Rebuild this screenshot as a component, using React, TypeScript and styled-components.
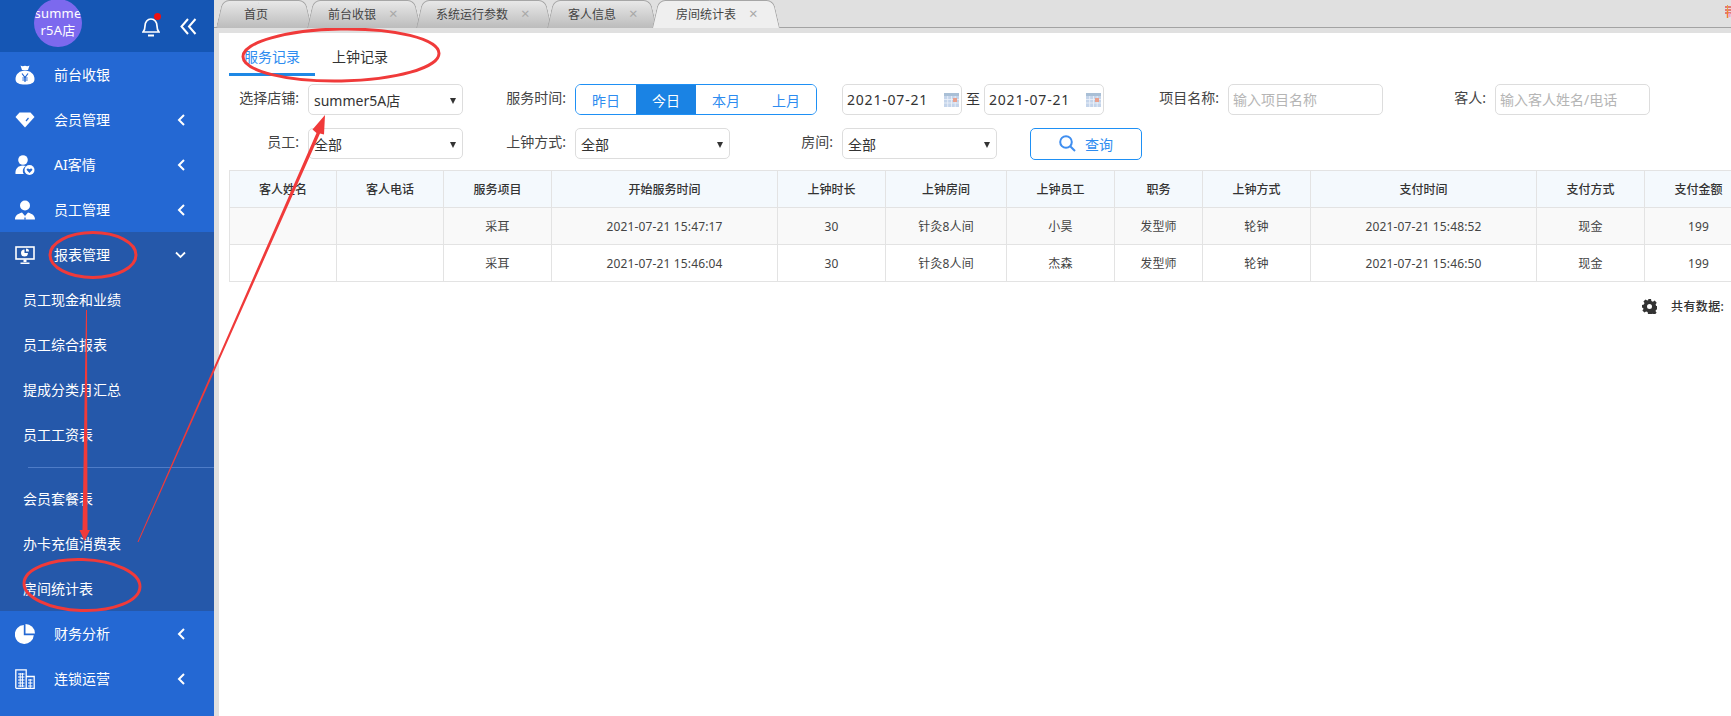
import React from "react";
import styled, { createGlobalStyle } from "styled-components";

const Global = createGlobalStyle`
  html, body { margin: 0; padding: 0; background: #fff; overflow: hidden; }
  body { font-family: "Noto Sans", "Noto Sans CJK SC", sans-serif; font-size: 14px; color: #333; }
  * { box-sizing: border-box; }
`;

const Shell = styled.div`
  position: relative;
  display: flex;
  width: 100%;
  height: 100vh;
  overflow: hidden;
`;

const Sidebar = styled.aside`
  flex: 0 0 214px;
  background: #2468d3;
  color: #fff;
  overflow: hidden;
`;

const SideHeader = styled.header`
  position: relative;
  display: flex;
  align-items: center;
  height: 52px;
  padding: 0 17px 0 34px;
  background: #1556b4;
`;

const Avatar = styled.div`
  width: 48px;
  height: 48px;
  margin-top: -6px;
  border-radius: 50%;
  background: #7c69ee;
  font-size: 13px;
  letter-spacing: 0.2px;
  line-height: 17px;
  padding-top: 6px;
  text-align: center;
  word-break: break-all;
  overflow: hidden;
`;

const HeaderTools = styled.div`
  display: flex;
  align-items: center;
  gap: 20px;
  margin-left: auto;
`;

const BellWrap = styled.span`
  position: relative;
  display: flex;
  &::after {
    content: "";
    position: absolute;
    right: -1px;
    top: -3px;
    width: 7px;
    height: 7px;
    border-radius: 50%;
    background: #f01010;
  }
`;

const MenuRow = styled.div<{ $open?: boolean }>`
  display: flex;
  align-items: center;
  height: 45px;
  padding: 0 28px 0 15px;
  background: ${(p) => (p.$open ? "#2558aa" : "transparent")};
`;

const MenuIcon = styled.span`
  display: flex;
  flex: 0 0 20px;
  margin-right: 19px;
`;

const MenuLabel = styled.span`
  font-size: 14px;
  line-height: 20px;
`;

const MenuChevron = styled.span`
  display: flex;
  margin-left: auto;
`;

const SubList = styled.div`
  background: #2558aa;
`;

const SubItem = styled.div`
  display: flex;
  align-items: center;
  height: 45px;
  padding: 0 0 2px 23px;
  font-size: 14px;
`;

const SubDivider = styled.div`
  height: 1px;
  margin: 10px 0 8px 28px;
  background: #4e7cc8;
`;

const Main = styled.main`
  flex: 1;
  min-width: 0;
  display: flex;
  flex-direction: column;
  background: #e0e0e0;
`;

const TabStrip = styled.nav`
  position: relative;
  display: flex;
  align-items: flex-end;
  flex: 0 0 28px;
  padding-left: 2px;
  border-bottom: 1px solid #a3a3a3;
`;

const tabFill = (active?: boolean) => (active ? "#efefef" : "linear-gradient(#e8e8e8, #bcbcbc)");

const Tab = styled.div<{ $w: number; $pad: number; $active?: boolean }>`
  position: relative;
  z-index: ${(p) => (p.$active ? 2 : 1)};
  display: flex;
  align-items: center;
  width: ${(p) => p.$w}px;
  height: 27px;
  margin-right: -4px;
  padding-left: ${(p) => p.$pad}px;
  font-size: 12px;
  color: #444;
  &::before,
  &::after {
    content: "";
    position: absolute;
    top: 0;
    bottom: -1px;
    z-index: -1;
    background: ${(p) => tabFill(p.$active)};
    border-top: 1px solid #a6a6a6;
    transform-origin: bottom center;
  }
  &::before {
    left: 0;
    right: 50%;
    border-left: 1px solid #a6a6a6;
    border-radius: 7px 0 0 0;
    transform: skewX(-13deg);
  }
  &::after {
    left: 50%;
    right: 0;
    border-right: 1px solid #a6a6a6;
    border-radius: 0 7px 0 0;
    transform: skewX(13deg);
  }
`;

const TabClose = styled.span<{ $left: number }>`
  position: absolute;
  left: ${(p) => p.$left}px;
  top: 5px;
  font-size: 15px;
  line-height: 16px;
  color: #a8a8a8;
`;

const CornerMark = styled.svg`
  position: absolute;
  right: 0;
  top: 5px;
`;

const Panel = styled.section`
  flex: 1;
  min-height: 0;
  margin: 5px 0 0 5px;
  padding-left: 10px;
  background: #fff;
  overflow: hidden;
`;

const SubTabs = styled.div`
  display: flex;
  gap: 2px;
  height: 44px;
`;

const SubTab = styled.div<{ $active?: boolean }>`
  display: flex;
  align-items: center;
  padding: 5px 15px 0;
  height: 43px;
  font-size: 14px;
  color: ${(p) => (p.$active ? "#2d8cf0" : "#333")};
  border-bottom: 3px solid ${(p) => (p.$active ? "#1e88e5" : "transparent")};
`;

const FilterRow = styled.div<{ $top: number }>`
  display: flex;
  align-items: center;
  height: 31px;
  margin-top: ${(p) => p.$top}px;
`;

const Field = styled.div<{ $w: number }>`
  display: flex;
  align-items: center;
  justify-content: flex-end;
  gap: 9px;
  flex: 0 0 ${(p) => p.$w}px;
`;

const FieldLabel = styled.label`
  font-size: 14px;
  line-height: 20px;
  margin-top: -3px;
  white-space: nowrap;
  color: #444;
`;

const SelectBox = styled.div`
  position: relative;
  display: flex;
  align-items: center;
  width: 155px;
  height: 31px;
  padding-left: 5px;
  border: 1px solid #ddd;
  border-radius: 5px;
  font-size: 14px;
  color: #333;
  &::after {
    content: "";
    position: absolute;
    right: 6px;
    top: 13px;
    border-style: solid;
    border-width: 6px 3px 0;
    border-color: #333 transparent transparent;
  }
`;

const Segments = styled.div`
  display: flex;
  height: 31px;
  border: 1px solid #1e90f5;
  border-radius: 6px;
  overflow: hidden;
`;

const Segment = styled.div<{ $active?: boolean }>`
  display: flex;
  align-items: center;
  justify-content: center;
  width: 60px;
  font-size: 14px;
  color: ${(p) => (p.$active ? "#fff" : "#2d8cf0")};
  background: ${(p) => (p.$active ? "#1a83e4" : "#fff")};
`;

const DateGroup = styled.div`
  display: flex;
  align-items: center;
  gap: 4px;
`;

const DateBox = styled.div`
  display: flex;
  align-items: center;
  justify-content: space-between;
  width: 120px;
  height: 31px;
  padding: 0 2px 0 4px;
  border: 1px solid #ddd;
  border-radius: 5px;
  font-size: 14px;
  letter-spacing: 0.8px;
`;

const To = styled.span`
  font-size: 14px;
  margin-top: -3px;
  color: #333;
`;

const TextInput = styled.input`
  width: 155px;
  height: 31px;
  padding: 0 4px;
  border: 1px solid #ddd;
  border-radius: 5px;
  font: inherit;
  font-size: 14px;
  &::placeholder { color: #b5b5b5; }
`;

const QueryButton = styled.button`
  display: flex;
  align-items: center;
  justify-content: center;
  gap: 9px;
  width: 112px;
  height: 32px;
  margin-left: 33px;
  background: #fff;
  border: 1px solid #1e90f5;
  border-radius: 5px;
  font: inherit;
  font-size: 14px;
  color: #2d8cf0;
`;

const DataTable = styled.table`
  table-layout: fixed;
  width: 1522px;
  margin-top: 11px;
  border-collapse: collapse;
  font-size: 12px;
  color: #444;
`;

const HeadCell = styled.th`
  height: 37px;
  padding: 0;
  background: #f4f9fd;
  border: 1px solid #e3e3e3;
  font-weight: 500;
  color: #333;
  text-align: center;
`;

const BodyRow = styled.tr<{ $striped?: boolean }>`
  background: ${(p) => (p.$striped ? "#f9f9f9" : "#fff")};
`;

const BodyCell = styled.td`
  height: 37px;
  padding: 0;
  border: 1px solid #e3e3e3;
  text-align: center;
  letter-spacing: 0.15px;
`;

const Footer = styled.div`
  display: flex;
  align-items: center;
  gap: 14px;
  margin: 15px 0 0 1413px;
  width: 90px;
  font-size: 12px;
  font-weight: 500;
  letter-spacing: 0.4px;
  white-space: nowrap;
`;

const Annotations = styled.svg`
  position: absolute;
  left: 0;
  top: 0;
  pointer-events: none;
`;

const W = "#fff";
const B = "#2468d3";

const BagIcon = () => (
  <svg width="20" height="20" viewBox="0 0 20 20">
    <path d="M5.5 0.5c1.4.9 3 .9 4.5.2 1.5.7 3.100.7 4.500-.2L13 5H7z" fill={W} />
    <path d="M10 5.500c5 0 9.500 3.500 9.500 8.500 0 4.300-4 5.500-9.500 5.500S.5 18.300.5 14C.5 9 5 5.500 10 5.500z" fill={W} />
    <path d="M7 8.500l3 4 3-4M10 12.500V17M7.300 13h5.400M7.300 15h5.400" stroke={B} strokeWidth="1.200" fill="none" />
  </svg>
);
const GemIcon = () => (
  <svg width="20" height="20" viewBox="0 0 20 20">
    <path d="M4.500 2.500h11L19.500 7 10 17.500.5 7z" fill={W} />
    <path d="M11 11l2.500-3" stroke={B} strokeWidth="1.200" />
  </svg>
);
const GuestIcon = () => (
  <svg width="20" height="20" viewBox="0 0 20 20">
    <circle cx="8" cy="5" r="4.800" fill={W} />
    <path d="M.5 19c-.5-5 2.500-8.500 7.500-8.500 1 0 2 .2 2.800.5-2 1.200-3 3-3 5 0 1.300.4 2.300 1 3z" fill={W} />
    <circle cx="14.500" cy="15" r="5" fill={W} />
    <path d="M14.500 18l-2.600-2.800c-.9-1.200.9-2.700 2.600-1 1.700-1.700 3.500-.2 2.600 1z" fill={B} />
  </svg>
);
const StaffIcon = () => (
  <svg width="20" height="20" viewBox="0 0 20 20">
    <circle cx="10" cy="5.500" r="5" fill={W} />
    <path d="M0 19.500c0-4 2.500-5.500 7-7l3 3.500 3-3.500c4.500 1.500 7 3 7 7z" fill={W} />
    <path d="M10 16.500l-1 3h2z" fill={B} />
  </svg>
);
const MonitorIcon = () => (
  <svg width="20" height="20" viewBox="0 0 20 20">
    <rect x="1" y="2" width="18" height="12" fill="none" stroke={W} strokeWidth="1.600" />
    <path d="M9.500 4.500a3.500 3.500 0 1 0 3.500 3.500H9.500z" fill={W} />
    <path d="M11 3.500a3 3 0 0 1 3 3h-3z" fill={W} />
    <path d="M8.500 14.500h3v2.500h-3zM5.500 17.500h9v1.500h-9z" fill={W} />
  </svg>
);
const PieIcon = () => (
  <svg width="20" height="20" viewBox="0 0 20 20">
    <path d="M8.800 1a9.500 9.500 0 1 0 10 10.200h-10z" fill={W} />
    <path d="M10.500 0a9.500 9.500 0 0 1 9.500 9.500h-9.500z" fill={W} />
  </svg>
);
const BuildingIcon = () => (
  <svg width="20" height="20" viewBox="0 0 20 20" fill="none" stroke={W} strokeWidth="1">
    <path d="M.8 19.300V.8h10.400v18.500M11.200 7.500h8v11.800H.8" strokeWidth="1.300" />
    <path d="M3 5h6.500M3 8h6.500M3 11h6.500M3 14h6.500M3 17h6.500M5.200 4v14M7.400 4v14M13 11h4.500M13 14h4.500M13 17h4.500M15.200 10v9" />
  </svg>
);

const ChevronLeft = () => (
  <svg width="9" height="12" viewBox="0 0 9 12" fill="none" stroke={W} strokeWidth="2">
    <path d="M7 1L2 6l5 5" />
  </svg>
);
const ChevronDown = () => (
  <svg width="11" height="8" viewBox="0 0 11 8" fill="none" stroke={W} strokeWidth="1.800">
    <path d="M1 1.500l4.500 4.500L10 1.500" />
  </svg>
);

const CalendarIcon = () => (
  <svg width="15" height="14" viewBox="0 0 15 14">
    <rect x="0" y="0" width="15" height="3" fill="#a9bfd6" />
    <rect x="0" y="3" width="15" height="11" fill="#c4d4ea" />
    <path d="M0 6.500h15M0 10h15M3.700 3v11M7.500 3v11M11.200 3v11" stroke="#eef3fa" strokeWidth="0.800" />
    <rect x="9" y="5" width="4" height="4" fill="#e9a08e" />
  </svg>
);

const menuTop = [
  { label: "前台收银", icon: <BagIcon /> },
  { label: "会员管理", icon: <GemIcon />, more: true },
  { label: "AI客情", icon: <GuestIcon />, more: true },
  { label: "员工管理", icon: <StaffIcon />, more: true },
];
const subA = ["员工现金和业绩", "员工综合报表", "提成分类月汇总", "员工工资表"];
const subB = ["会员套餐表", "办卡充值消费表", "房间统计表"];
const menuBottom = [
  { label: "财务分析", icon: <PieIcon /> },
  { label: "连锁运营", icon: <BuildingIcon /> },
];

const tabs = [
  { label: "首页", w: 95, pad: 28 },
  { label: "前台收银", w: 113, pad: 21, close: 82 },
  { label: "系统运行参数", w: 135, pad: 20, close: 105 },
  { label: "客人信息", w: 109, pad: 21, close: 82 },
  { label: "房间统计表", w: 128, pad: 24, close: 97, active: true },
];

const columns: [string, number][] = [
  ["客人姓名", 107], ["客人电话", 107], ["服务项目", 108], ["开始服务时间", 226],
  ["上钟时长", 108], ["上钟房间", 121], ["上钟员工", 108], ["职务", 88],
  ["上钟方式", 108], ["支付时间", 226], ["支付方式", 108], ["支付金额", 108],
];

const rows = [
  ["", "", "采耳", "2021-07-21 15:47:17", "30", "针灸8人间", "小昊", "发型师", "轮钟", "2021-07-21 15:48:52", "现金", "199"],
  ["", "", "采耳", "2021-07-21 15:46:04", "30", "针灸8人间", "杰森", "发型师", "轮钟", "2021-07-21 15:46:50", "现金", "199"],
];

export default function App() {
  return (
    <Shell>
      <Global />
      <Sidebar>
        <SideHeader>
          <Avatar>summer5A店</Avatar>
          <HeaderTools>
            <BellWrap>
              <svg width="18" height="21" viewBox="0 0 18 21" fill="none" stroke="#fff" strokeWidth="1.700">
                <path d="M1 16c1.500-1.500 2-3 2-6 0-4 2.500-7 6-7s6 3 6 7c0 3 .5 4.500 2 6z" />
                <path d="M6 19.500h6" strokeWidth="2" />
              </svg>
            </BellWrap>
            <svg width="17" height="17" viewBox="0 0 17 17" fill="none" stroke="#fff" strokeWidth="2">
              <path d="M8 1L1.500 8.500 8 16M15.500 1L9 8.500l6.500 7.500" />
            </svg>
          </HeaderTools>
        </SideHeader>
        {menuTop.map((m) => (
          <MenuRow key={m.label}>
            <MenuIcon>{m.icon}</MenuIcon>
            <MenuLabel>{m.label}</MenuLabel>
            {m.more && (
              <MenuChevron>
                <ChevronLeft />
              </MenuChevron>
            )}
          </MenuRow>
        ))}
        <MenuRow $open>
          <MenuIcon>
            <MonitorIcon />
          </MenuIcon>
          <MenuLabel>报表管理</MenuLabel>
          <MenuChevron>
            <ChevronDown />
          </MenuChevron>
        </MenuRow>
        <SubList>
          {subA.map((s) => (
            <SubItem key={s}>{s}</SubItem>
          ))}
          <SubDivider />
          {subB.map((s) => (
            <SubItem key={s}>{s}</SubItem>
          ))}
        </SubList>
        {menuBottom.map((m) => (
          <MenuRow key={m.label}>
            <MenuIcon>{m.icon}</MenuIcon>
            <MenuLabel>{m.label}</MenuLabel>
            <MenuChevron>
              <ChevronLeft />
            </MenuChevron>
          </MenuRow>
        ))}
      </Sidebar>
      <Main>
        <TabStrip>
          {tabs.map((t) => (
            <Tab key={t.label} $w={t.w} $pad={t.pad} $active={t.active}>
              {t.label}
              {t.close && <TabClose $left={t.close}>×</TabClose>}
            </Tab>
          ))}
          <CornerMark width="6" height="13" viewBox="0 0 6 13" fill="none">
            <path d="M0 2h6M0 5h6M0 8h6" stroke="#e81010" strokeWidth="1.200" />
            <path d="M2.500 0v6" stroke="#e8a040" strokeWidth="1" />
            <path d="M2.500 6v7" stroke="#f08030" strokeWidth="1.500" />
            <path d="M4.500 8v4" stroke="#f0a0d0" strokeWidth="2" />
          </CornerMark>
        </TabStrip>
        <Panel>
          <SubTabs>
            <SubTab $active>服务记录</SubTab>
            <SubTab>上钟记录</SubTab>
          </SubTabs>
          <FilterRow $top={7}>
            <Field $w={234}>
              <FieldLabel>选择店铺:</FieldLabel>
              <SelectBox>summer5A店</SelectBox>
            </Field>
            <Field $w={354}>
              <FieldLabel>服务时间:</FieldLabel>
              <Segments>
                <Segment>昨日</Segment>
                <Segment $active>今日</Segment>
                <Segment>本月</Segment>
                <Segment>上月</Segment>
              </Segments>
            </Field>
            <Field $w={287}>
              <DateGroup>
                <DateBox>
                  2021-07-21
                  <CalendarIcon />
                </DateBox>
                <To>至</To>
                <DateBox>
                  2021-07-21
                  <CalendarIcon />
                </DateBox>
              </DateGroup>
            </Field>
            <Field $w={279}>
              <FieldLabel>项目名称:</FieldLabel>
              <TextInput placeholder="输入项目名称" />
            </Field>
            <Field $w={267}>
              <FieldLabel>客人:</FieldLabel>
              <TextInput placeholder="输入客人姓名/电话" />
            </Field>
          </FilterRow>
          <FilterRow $top={13}>
            <Field $w={234}>
              <FieldLabel>员工:</FieldLabel>
              <SelectBox>全部</SelectBox>
            </Field>
            <Field $w={267}>
              <FieldLabel>上钟方式:</FieldLabel>
              <SelectBox>全部</SelectBox>
            </Field>
            <Field $w={267}>
              <FieldLabel>房间:</FieldLabel>
              <SelectBox>全部</SelectBox>
            </Field>
            <QueryButton>
              <svg width="17" height="17" viewBox="0 0 17 17" fill="none" stroke="#3f8ef0" strokeWidth="2">
                <circle cx="7" cy="7" r="5.800" />
                <path d="M11.200 11.200L16 16" />
              </svg>
              查询
            </QueryButton>
          </FilterRow>
          <DataTable>
            <colgroup>
              {columns.map(([name, w]) => (
                <col key={name} width={w} />
              ))}
            </colgroup>
            <thead>
              <tr>
                {columns.map(([name]) => (
                  <HeadCell key={name}>{name}</HeadCell>
                ))}
              </tr>
            </thead>
            <tbody>
              {rows.map((r, i) => (
                <BodyRow key={i} $striped={i === 0}>
                  {r.map((c, j) => (
                    <BodyCell key={j}>{c}</BodyCell>
                  ))}
                </BodyRow>
              ))}
            </tbody>
          </DataTable>
          <Footer>
            <svg width="15" height="15" viewBox="0 0 15 15">
              <path
                fillRule="evenodd"
                fill="#333"
                d="M6 0h3l.4 2 1.500.7L12.700 1.600l2 2.100-1.100 1.700.6 1.500 1.800.4v3l-1.900.4-.6 1.400 1.100 1.700-2.100 2-1.700-1.100-1.400.6L9 15H6l-.4-1.900-1.500-.6-1.700 1.100-2-2 1.100-1.700-.6-1.500L0 9V6l1.900-.4.600-1.500-1.100-1.700 2.100-2 1.700 1.100 1.400-.6zM7.500 5a2.500 2.500 0 1 0 0 5 2.500 2.500 0 0 0 0-5z"
              />
            </svg>
            共有数据:
          </Footer>
        </Panel>
      </Main>
      <Annotations width="1731" height="716" viewBox="0 0 1731 716" fill="none" stroke="#f03a3a">
        <ellipse cx="341" cy="55" rx="98" ry="26" strokeWidth="3" transform="rotate(-1 341 55)" />
        <ellipse cx="93" cy="255" rx="43" ry="22.500" strokeWidth="3" />
        <ellipse cx="82" cy="585" rx="58" ry="25.500" strokeWidth="3" transform="rotate(2 82 585)" />
        <path d="M86 310 L87 310 L87.500 530 L90 530 L84.500 541 L79.500 530 L82.500 530 Z" fill="#f03a3a" stroke="none" />
        <path d="M137.500 542 L316.500 133 L312.500 129.500 L325 115 L324 134.500 L320 133.500 L138.500 542 Z" fill="#f03a3a" stroke="none" />
      </Annotations>
    </Shell>
  );
}
